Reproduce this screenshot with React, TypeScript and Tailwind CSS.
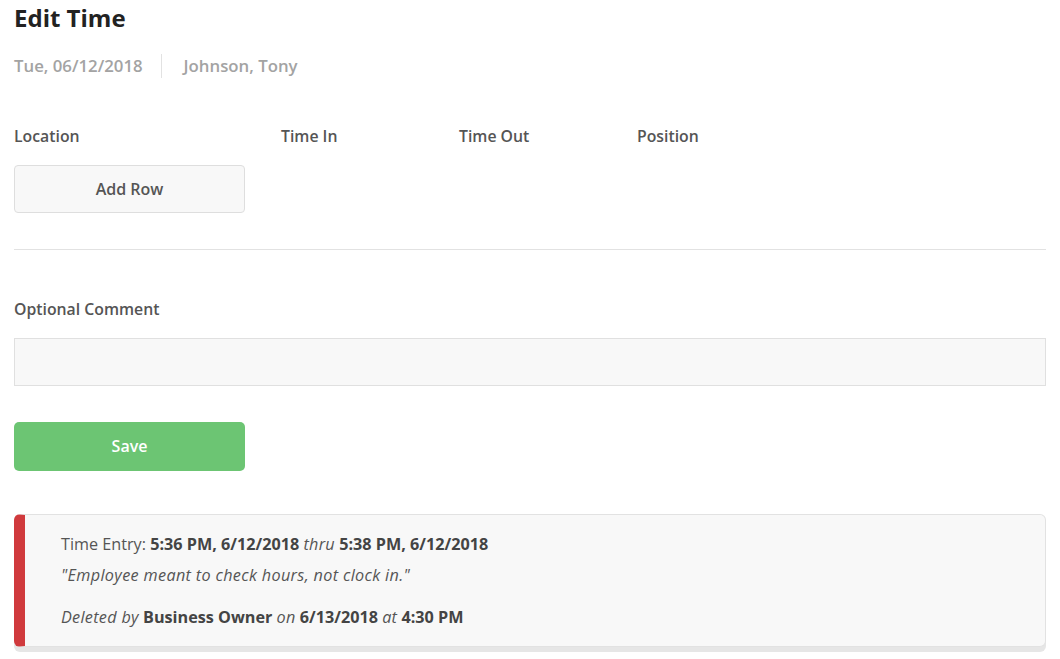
export default function App() {
  return (
    <div className="min-h-screen bg-white px-[14px] font-['Open_Sans',sans-serif] text-[#555]">
      <h1 className="h-[36px] text-[24px] font-bold leading-[36px] text-[#222]">Edit Time</h1>

      <div className="mt-[18px] flex h-[24px] items-center text-[16.8px] font-semibold text-[#a3a3a3]">
        <span>Tue, 06/12/2018</span>
        <span className="mx-[18px] h-[24px] w-px bg-[#e2e2e2]" />
        <span className="ml-[4px]">Johnson, Tony</span>
      </div>

      <div className="mt-[46px] flex h-[24px] items-center text-[15.8px] font-semibold leading-[24px] text-[#555]">
        <span className="w-[267px]">Location</span>
        <span className="w-[178px]">Time In</span>
        <span className="w-[178px]">Time Out</span>
        <span>Position</span>
      </div>

      <button className="mt-[17px] flex h-[48px] w-[231px] items-center justify-center rounded-[4px] border border-[#dedede] bg-[#f8f8f8] text-[16px] font-semibold text-[#555]">
        Add Row
      </button>

      <div className="mt-[36px] border-t border-[#e2e2e2]" />

      <div className="mt-[47px] h-[24px] text-[15.8px] font-semibold leading-[24px] text-[#555]">Optional Comment</div>

      <input className="mt-[17px] block h-[48px] w-full border border-[#e0e0e0] bg-[#f8f8f8] outline-none" />

      <button className="mt-[36px] flex h-[49px] w-[231px] items-center justify-center rounded-[5px] bg-[#6cc573] pb-[2px] text-[16px] font-semibold text-white">
        Save
      </button>

      <div className="mt-[43px] rounded-[6px] border border-l-[11px] border-[#e2e2e2] border-l-[#d03a3d] bg-[#f8f8f8] pb-[18px] pl-[36px] pt-[18px] text-[16.2px] text-[#555] shadow-[0_5px_0_#e6e6e6]">
        <div className="h-[22px] leading-[22px]">
          Time Entry: <b className="font-bold text-[#444]">5:36 PM, 6/12/2018</b> <i className="tracking-[0.3px]">thru</i>{" "}
          <b className="font-bold text-[#444]">5:38 PM, 6/12/2018</b>
        </div>
        <div className="mt-[9px] h-[22px] italic leading-[22px] tracking-[0.35px]">"Employee meant to check hours, not clock in."</div>
        <div className="mt-[20px] h-[22px] leading-[22px]">
          <i className="tracking-[0.3px]">Deleted by</i> <b className="font-bold text-[#444]">Business Owner</b>{" "}
          <i className="tracking-[0.3px]">on</i> <b className="font-bold text-[#444]">6/13/2018</b>{" "}
          <i className="tracking-[0.3px]">at</i> <b className="font-bold text-[#444]">4:30 PM</b>
        </div>
      </div>
    </div>
  );
}
